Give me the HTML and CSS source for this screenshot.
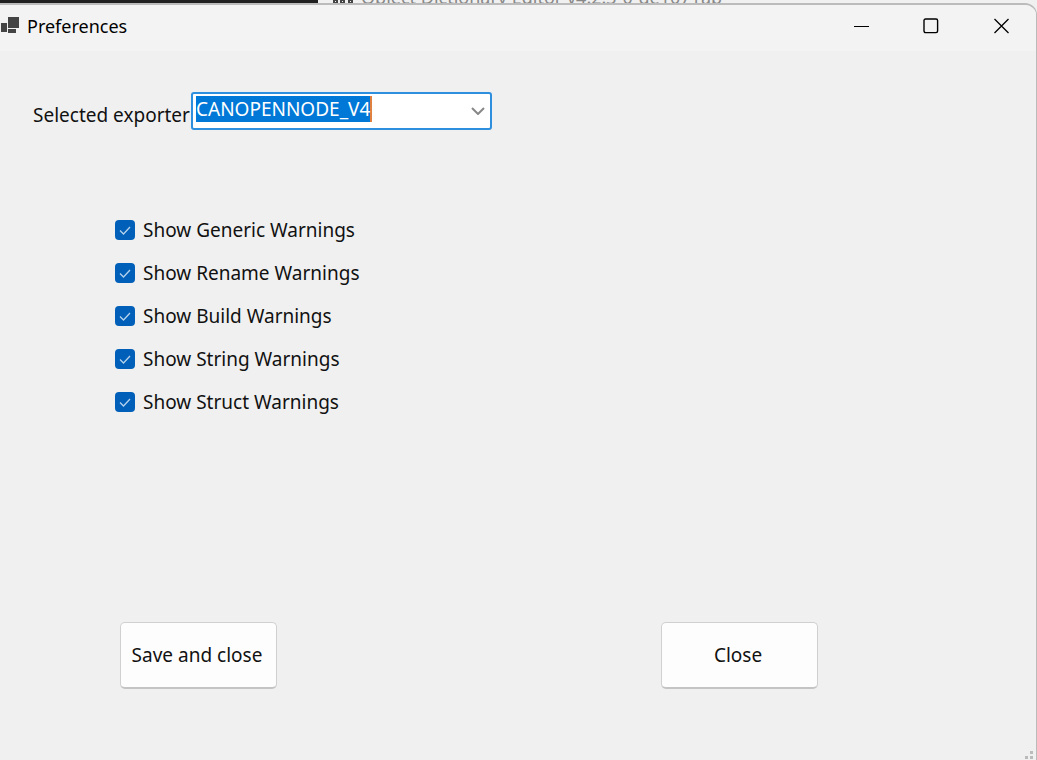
FILE: index.html
```
<!DOCTYPE html>
<html lang="en">
<head>
	<meta charset="UTF-8">
	<title>Preferences</title>
	<link rel="stylesheet" href="styles.css">
</head>
<body>
	<div class="behind">
		<div class="behindDark"></div>
		<div class="behindTitle">
			<svg width="22" height="6" viewBox="0 0 22 6" fill="none" stroke="#444" stroke-width="2">
				<rect x="2" y="2" width="3" height="3"/>
				<rect x="9" y="2" width="3" height="3"/>
				<rect x="17" y="2" width="3" height="3"/>
			</svg>
			<span>Object Dictionary Editor v4.2.3-0-ge1071ab</span>
		</div>
	</div>
	<section class="window">
		<header class="titleBar">
			<svg class="appIcon" width="20" height="20" viewBox="0 0 20 20" fill="#444">
				<rect x="8" y="1" width="11" height="11"/>
				<rect x="1" y="7" width="6" height="9"/>
				<rect x="8" y="13" width="8" height="4"/>
			</svg>
			<h1>Preferences</h1>
			<div class="winBtns">
				<button type="button" aria-label="Minimize">
					<svg width="16" height="16" viewBox="0 0 16 16"><path d="M1 8.5h15"/></svg>
				</button>
				<button type="button" aria-label="Maximize">
					<svg width="16" height="16" viewBox="0 0 16 16"><rect x="1" y="1" width="13.6" height="13.6" rx="1.5" stroke-width="1.4"/></svg>
				</button>
				<button type="button" aria-label="Close window">
					<svg width="16" height="16" viewBox="0 0 16 16"><path d="M1.5 1l14 14M15.5 1l-14 14" stroke-width="1.3"/></svg>
				</button>
			</div>
		</header>
		<form class="main" action="">
			<div class="exporter">
				<label for="exporter">Selected exporter</label>
				<div class="combo">
					<select id="exporter">
						<option>CANOPENNODE_V4</option>
					</select>
					<svg class="arrow" width="14" height="8" viewBox="0 0 14 8"><path d="M1 1l6 6 6-6"/></svg>
				</div>
			</div>
			<div class="warnings">
				<label><input type="checkbox" checked>Show Generic Warnings</label>
				<label><input type="checkbox" checked>Show Rename Warnings</label>
				<label><input type="checkbox" checked>Show Build Warnings</label>
				<label><input type="checkbox" checked>Show String Warnings</label>
				<label><input type="checkbox" checked>Show Struct Warnings</label>
			</div>
			<div class="actions">
				<button type="button">Save and close</button>
				<button type="button">Close</button>
			</div>
		</form>
		<svg class="grip" width="10" height="10" viewBox="0 0 10 10" fill="#bbb">
			<rect x="5" y="1" width="3" height="3"/>
			<rect x="0" y="6" width="3" height="3"/>
			<rect x="5" y="6" width="3" height="3"/>
		</svg>
	</section>
</body>
</html>
```
FILE: styles.css
```
*{
	box-sizing:border-box;
}
body{
	margin:0;
	height:100vh;
	display:flex;
	flex-direction:column;
	overflow:hidden;
	background:#f0f0f0;
	color:#111;
	font:19px/26px "Noto Sans", sans-serif;
}
button, select{
	font:inherit;
	color:inherit;
}
.behind{
	flex:none;
	display:flex;
	height:3px;
}
.behindDark{
	width:318px;
	background:#202020;
}
.behindTitle{
	display:flex;
	align-items:flex-end;
	height:4px;
	padding-left:14px;
	color:#888;
	font-size:18px;
	line-height:14px;
	white-space:nowrap;
}
.behindTitle svg{
	flex:none;
	margin-right:7px;
}
.window{
	position:relative;
	flex:1;
	display:flex;
	flex-direction:column;
	border-top:2px solid #bbb;
	border-right:1px solid #bbb;
	border-radius:0 12px 0 0;
	background:#f0f0f0;
	overflow:hidden;
}
.titleBar{
	display:flex;
	align-items:center;
	height:46px;
	padding-bottom:4px;
	background:#f3f3f3;
}
.appIcon{
	margin-right:7px;
}
.titleBar h1{
	margin:0;
	font:18px/26px "Noto Sans", sans-serif;
	color:#000;
}
.winBtns{
	display:flex;
	margin-left:auto;
}
.winBtns button{
	display:flex;
	align-items:center;
	justify-content:center;
	width:70px;
	height:42px;
	padding:0;
	border:0;
	background:none;
}
.winBtns svg{
	fill:none;
	stroke:#000;
}
.main{
	flex:1;
	display:flex;
	flex-direction:column;
	padding:41px 33px 71px;
}
.exporter{
	display:flex;
	align-items:center;
}
.exporter label{
	width:158px;
	padding-top:8px;
	white-space:nowrap;
}
.combo{
	position:relative;
	width:301px;
}
.combo select{
	display:block;
	width:100%;
	height:38px;
	padding:0 30px 4px 3px;
	border:2px solid #2d8fdd;
	border-radius:3px;
	outline:0;
	appearance:none;
	/* selected text highlight and the caret after it */
	background:linear-gradient(90deg, #0078d7 174px, #e08040 174px) 3px 2px/176px 26px no-repeat #fff;
	color:#fff;
}
.combo option{
	color:#111;
}
.arrow{
	position:absolute;
	right:7px;
	top:15px;
	fill:none;
	stroke:#888;
	stroke-width:2;
	pointer-events:none;
}
.warnings{
	display:flex;
	flex-direction:column;
	align-items:flex-start;
	padding:78px 0 0 82px;
}
.warnings label{
	display:flex;
	align-items:center;
	height:43px;
}
.warnings input{
	width:20px;
	height:20px;
	margin:0 8px 0 0;
	border-radius:4px;
	appearance:none;
	background:#fff;
	border:1px solid #888;
}
.warnings input:checked{
	border:0;
	background:#005fb8 url("data:image/svg+xml,%3Csvg xmlns='http://www.w3.org/2000/svg' viewBox='0 0 20 20' fill='none' stroke='%23b5d2ec' stroke-width='1.3'%3E%3Cpath d='M5 10.5l3.5 3.5L15 7'/%3E%3C/svg%3E");
}
.actions{
	display:flex;
	gap:384px;
	margin-top:auto;
	padding-left:87px;
}
.actions button{
	flex:none;
	width:157px;
	height:67px;
	padding:0 3px 0 0;
	border:1px solid #d0d0d0;
	border-bottom:2px solid #c4c4c4;
	border-radius:5px;
	background:#fdfdfd;
}
.grip{
	position:absolute;
	right:1px;
	bottom:0;
}
```
